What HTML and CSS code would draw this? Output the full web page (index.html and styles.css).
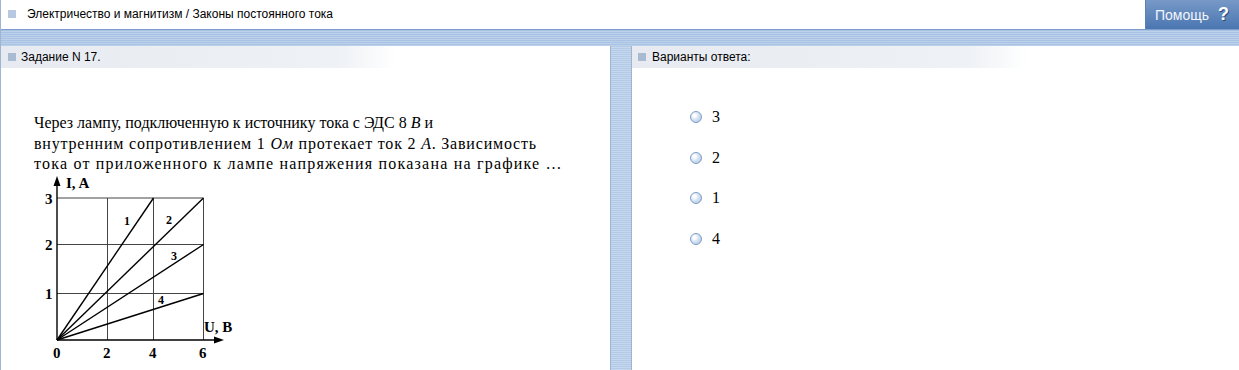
FILE: index.html
```html
<!DOCTYPE html>
<html lang="ru">
<head>
  <meta charset="UTF-8">
  <title>Задание N 17</title>
  <link rel="stylesheet" href="styles.css">
</head>
<body>
  <div class="topbar">
    <div class="crumbs">
      <span class="sq sq-light"></span>
      <span>Электричество и магнитизм / Законы постоянного тока</span>
    </div>
    <div class="help">Помощь <b>?</b></div>
  </div>
  <div class="band"></div>

  <div class="main">
    <div class="panel panel-left">
      <div class="panel-head"><span class="sq"></span>Задание N 17.</div>
      <div class="question">
        <p><span class="ln">Через лампу, подключенную к источнику тока с ЭДС 8 <i>В</i> и</span>
        <span class="ln ln-2">внутренним сопротивлением 1 <i>Ом</i> протекает ток 2 <i>А</i>. Зависимость</span>
        <span class="ln ln-3">тока от приложенного к лампе напряжения показана на графике …</span></p>
        <svg class="graph" width="210" height="195" viewBox="0 0 210 195">
          <g stroke="#444" stroke-width="1" fill="none">
            <line x1="16" y1="26" x2="162.5" y2="26"/>
            <line x1="16" y1="72.5" x2="162.5" y2="72.5"/>
            <line x1="16" y1="121.5" x2="162.5" y2="121.5"/>
            <line x1="66.5" y1="26" x2="66.5" y2="168"/>
            <line x1="112.5" y1="26" x2="112.5" y2="168"/>
            <line x1="162.5" y1="26" x2="162.5" y2="168"/>
          </g>
          <g stroke="#000" stroke-width="1.4" fill="none">
            <line x1="16" y1="168" x2="16" y2="10"/>
            <line x1="16" y1="168" x2="176" y2="168"/>
            <line x1="16" y1="168" x2="112.5" y2="26"/>
            <line x1="16" y1="168" x2="162.5" y2="26"/>
            <line x1="16" y1="168" x2="162.5" y2="72.5"/>
            <line x1="16" y1="168" x2="162.5" y2="121.5"/>
          </g>
          <polygon points="16,4 12.5,14 19.5,14" fill="#000"/>
          <polygon points="183,168 173,164.5 173,171.5" fill="#000"/>
          <g class="g-text">
            <text x="25" y="16">I, A</text>
            <text x="163" y="160">U, B</text>
            <text x="4" y="32">3</text>
            <text x="4" y="78">2</text>
            <text x="4" y="127">1</text>
            <text x="12" y="186">0</text>
            <text x="62" y="186">2</text>
            <text x="108" y="186">4</text>
            <text x="158" y="186">6</text>
          </g>
          <g class="g-num">
            <text x="83" y="53">1</text>
            <text x="125" y="52">2</text>
            <text x="130" y="88">3</text>
            <text x="117" y="132">4</text>
          </g>
        </svg>
      </div>
    </div>
    <div class="divider"></div>
    <div class="panel panel-right">
      <div class="panel-head"><span class="sq"></span>Варианты ответа:</div>
      <ul class="answers">
        <li><span class="radio"></span>3</li>
        <li><span class="radio"></span>2</li>
        <li><span class="radio"></span>1</li>
        <li><span class="radio"></span>4</li>
      </ul>
    </div>
  </div>
</body>
</html>
```

FILE: styles.css
```css
:root {
  --edge: #9fb4d1;
  --stripe-a: #a8c2e3;
  --stripe-b: #bdd1ea;
  --head-bg: #e7ebf1;
}

html, body {
  height: 100%;
}

body {
  margin: 0;
  font-family: 'Liberation Sans', Arial, sans-serif;
  font-size: 12px;
  color: #000;
  display: flex;
  flex-direction: column;
  background: #fff;
  border-left: 1px solid var(--edge);
  box-sizing: border-box;
}

.topbar {
  height: 29px;
  display: flex;
  justify-content: space-between;
  background: #fff;
}

.crumbs {
  display: flex;
  align-items: center;
  gap: 11px;
  padding-left: 7px;
  padding-bottom: 1px;
}

.sq {
  display: inline-block;
  width: 8px;
  height: 8px;
  background: #a9bbd0;
}

.sq-light {
  background: #b7c9e0;
}

.help {
  width: 94px;
  display: flex;
  align-items: center;
  justify-content: flex-end;
  gap: 9px;
  padding-right: 10px;
  box-sizing: border-box;
  font-size: 14px;
  color: #f2f6fb;
  background: linear-gradient(#7799c7, #4a76b1);
  border-left: 1px solid #5a80b4;
}

.help b {
  font-size: 18px;
  color: #fff;
  text-shadow: 1px 1px 0 #2c4c78;
}

.band {
  height: 16px;
  border-top: 1px solid #7d9ecb;
  background: repeating-linear-gradient(var(--stripe-a) 0 1px, var(--stripe-b) 1px 2px);
}

.main {
  flex: 1;
  display: flex;
}

.panel {
  background: #fff;
}

.panel-left {
  width: 609px;
}

.panel-right {
  flex: 1;
}

.divider {
  width: 20px;
  border-left: 1px solid var(--edge);
  border-right: 1px solid var(--edge);
  background: repeating-linear-gradient(#b3cae7 0 1px, #c6d8ee 1px 2px);
}

.panel-head {
  width: 395px;
  height: 22px;
  display: flex;
  align-items: center;
  gap: 5px;
  padding-left: 7px;
  box-sizing: border-box;
  background: linear-gradient(to right, var(--head-bg), #eef1f5 85%, #fff);
}

.panel-right .panel-head {
  padding-left: 6px;
  gap: 6px;
}

.question {
  padding: 45px 0 0 33px;
}

.question p {
  margin: 0;
  white-space: nowrap;
  font-family: 'Liberation Serif', 'Times New Roman', serif;
  font-size: 16px;
  line-height: 20.5px;
}

.ln {
  display: block;
}

.ln-2 {
  letter-spacing: 0.8px;
}

.ln-3 {
  letter-spacing: 1.2px;
}

.graph {
  display: block;
  margin-left: 7px;
  margin-top: -3px;
}

.g-text text {
  font-family: 'Liberation Serif', serif;
  font-weight: bold;
  font-size: 15px;
}

.g-num text {
  font-family: 'Liberation Serif', serif;
  font-weight: bold;
  font-size: 12px;
}

.answers {
  list-style: none;
  margin: 0;
  padding: 39px 0 0 58px;
  font-family: 'Liberation Serif', 'Times New Roman', serif;
  font-size: 16px;
}

.answers li {
  display: flex;
  align-items: center;
  gap: 10px;
  height: 20px;
  margin-bottom: 20.5px;
}

.radio {
  width: 10px;
  height: 10px;
  border-radius: 50%;
  border: 1px solid #7e9ec6;
  background: radial-gradient(circle at 35% 35%, #fff 0 15%, #d6e3f3 45%, #a9c1e0 100%);
}
```
